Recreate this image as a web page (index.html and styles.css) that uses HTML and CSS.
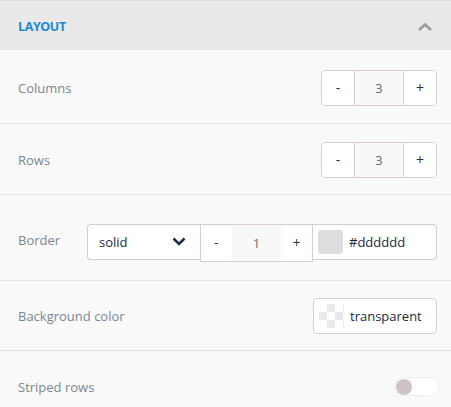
FILE: index.html
```html
<!DOCTYPE html>
<html lang="en">
<head>
    <meta charset="UTF-8">
    <title>Layout settings</title>
    <link rel="stylesheet" href="styles.css">
</head>
<body>
    <div class="panel">
        <!-- Section header -->
        <div class="panel-header">
            <span class="panel-title">LAYOUT</span>
            <svg class="collapse-icon" width="16" height="10" viewBox="0 0 16 10">
                <path d="M2 8 L8 2.5 L14 8" fill="none" stroke="#9b9b9b" stroke-width="2.6"/>
            </svg>
        </div>

        <div class="setting-row row-columns">
            <span class="setting-label">Columns</span>
            <div class="stepper">
                <button class="step-btn">-</button>
                <span class="step-value">3</span>
                <button class="step-btn">+</button>
            </div>
        </div>

        <div class="setting-row row-rows">
            <span class="setting-label">Rows</span>
            <div class="stepper">
                <button class="step-btn">-</button>
                <span class="step-value">3</span>
                <button class="step-btn">+</button>
            </div>
        </div>

        <div class="setting-row row-border">
            <span class="setting-label">Border</span>
            <div class="border-group">
                <div class="select-box">
                    <span>solid</span>
                    <svg width="14" height="9" viewBox="0 0 14 9">
                        <path d="M1.5 1.5 L7 7 L12.5 1.5" fill="none" stroke="#1f2d45" stroke-width="2.6"/>
                    </svg>
                </div>
                <div class="stepper stepper-inline">
                    <button class="step-btn">-</button>
                    <span class="step-value">1</span>
                    <button class="step-btn">+</button>
                </div>
                <div class="color-input color-inline">
                    <span class="swatch swatch-grey"></span>
                    <span class="color-text">#dddddd</span>
                </div>
            </div>
        </div>

        <div class="setting-row row-bg">
            <span class="setting-label">Background color</span>
            <div class="color-input">
                <span class="swatch swatch-checker"></span>
                <span class="color-text">transparent</span>
            </div>
        </div>

        <div class="setting-row row-striped">
            <span class="setting-label">Striped rows</span>
            <div class="toggle"><span class="toggle-knob"></span></div>
        </div>
    </div>
</body>
</html>
```

FILE: styles.css
```css
* {
    box-sizing: border-box;
}

body {
    margin: 0;
    background: #f9f9f9;
    font-family: "Open Sans", "Liberation Sans", sans-serif;
}

.panel {
    width: 451px;
    border-top: 1px solid #dcdde2;
}

.panel-header {
    height: 49px;
    background: #e9e9e9;
    display: flex;
    align-items: center;
    justify-content: space-between;
    padding: 0 18px 0 18px;
}

.panel-title {
    color: #1d87d6;
    font-size: 12.5px;
    font-weight: 700;
    letter-spacing: -0.4px;
    margin-top: 2px;
}

.collapse-icon {
    margin-top: 2px;
}

.setting-row {
    display: flex;
    align-items: center;
    justify-content: space-between;
    padding: 0 14px 0 18px;
    border-bottom: 1px solid #e3e3e3;
}

.row-columns {
    height: 74px;
    padding-top: 2px;
}

.row-rows {
    height: 71px;
    padding-top: 1px;
}

.row-border {
    height: 86px;
    padding-top: 10px;
}

.row-border .setting-label {
    margin-top: -6px;
}

.row-bg {
    height: 70px;
    padding-top: 1px;
}

.row-striped {
    height: 56px;
    border-bottom: none;
    padding-top: 15px;
    padding-right: 12px;
}

.setting-label {
    color: #7b8792;
    font-size: 13px;
}

.stepper {
    display: flex;
    height: 36px;
    border: 1px solid #d6cdcf;
    border-radius: 4px;
    background: #ffffff;
    overflow: hidden;
}

.step-btn {
    width: 32px;
    border: none;
    background: #ffffff;
    font-family: inherit;
    font-size: 14px;
    color: #2a2f3a;
    padding: 0;
    cursor: pointer;
}

.step-value {
    width: 50px;
    display: flex;
    align-items: center;
    justify-content: center;
    background: #f8f8f8;
    border-left: 1px solid #d6cdcf;
    border-right: 1px solid #d6cdcf;
    color: #6b6b6b;
    font-size: 13px;
}

.border-group {
    display: flex;
    align-items: flex-start;
}

.select-box {
    width: 113px;
    height: 36px;
    border: 1px solid #d6cdcf;
    border-right: none;
    border-radius: 4px 0 0 4px;
    background: #ffffff;
    display: flex;
    align-items: center;
    justify-content: space-between;
    padding: 0 14px 0 11px;
    color: #1e2a3c;
    font-size: 13px;
}

.stepper-inline {
    width: 113px;
    height: 38px;
    border-radius: 0;
}

.stepper-inline .step-value {
    border: none;
}

.stepper-inline .step-btn {
    width: 31px;
}

.color-input {
    width: 124px;
    height: 36px;
    border: 1px solid #d6cdcf;
    border-radius: 4px;
    background: #ffffff;
    display: flex;
    align-items: center;
    gap: 6px;
    padding: 0 5px;
}

.color-inline {
    border-left: none;
    border-radius: 0 4px 4px 0;
}

.swatch {
    width: 25px;
    height: 24px;
    border-radius: 3px;
}

.swatch-grey {
    background: #dddddd;
}

.swatch-checker {
    background-color: #ffffff;
    background-image:
        linear-gradient(45deg, #e8e8e8 25%, transparent 25%, transparent 75%, #e8e8e8 75%),
        linear-gradient(45deg, #e8e8e8 25%, transparent 25%, transparent 75%, #e8e8e8 75%);
    background-size: 16px 16px;
    background-position: 0 0, 8px 8px;
}

.color-text {
    color: #1e2a3c;
    font-size: 13px;
}

.toggle {
    width: 45px;
    height: 19px;
    border: 1px solid #ececec;
    border-radius: 10px;
    background: #ffffff;
    display: flex;
    align-items: center;
    padding-left: 1px;
}

.toggle-knob {
    width: 16px;
    height: 16px;
    border-radius: 50%;
    background: #cdc2c8;
}
```
